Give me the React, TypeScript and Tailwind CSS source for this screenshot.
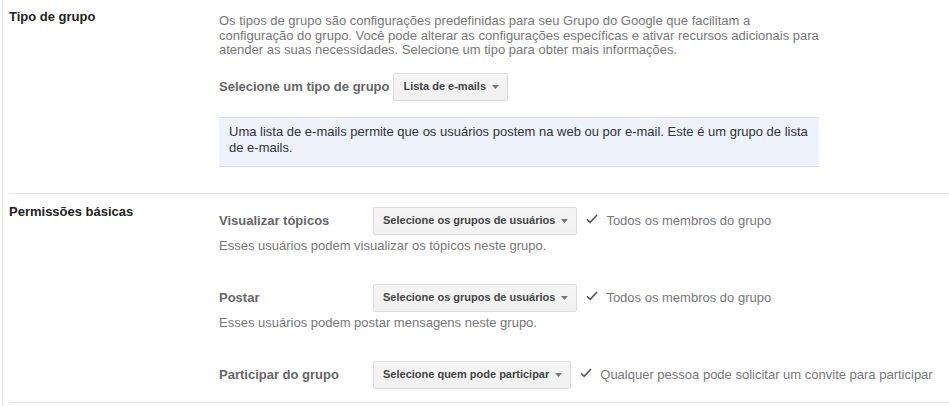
import { ReactNode } from 'react';

const font = { fontFamily: '"Liberation Sans", Arial, sans-serif' };

function Caret() {
  return (
    <svg width="7" height="4" viewBox="0 0 7 4" className="shrink-0">
      <path d="M0 0 L7 0 L3.5 4 Z" fill="#777" />
    </svg>
  );
}

function Check() {
  return (
    <svg width="12" height="10" viewBox="0 0 12 10" className="shrink-0 -mt-[4px]">
      <path d="M1 5.2 L4.2 8.4 L11 1" fill="none" stroke="#555" strokeWidth="1.6" />
    </svg>
  );
}

function DropButton({ children }: { children: ReactNode }) {
  return (
    <button className="flex items-center gap-[6px] h-[28px] pl-[9px] pr-[8px] rounded-[2px] border border-[#dcdcdc] bg-gradient-to-b from-[#f5f5f5] to-[#f1f1f1] text-[11px] font-bold text-[#444] whitespace-nowrap">
      {children}
      <Caret />
    </button>
  );
}

function Permission({ label, button, value, help }: { label: string; button: string; value: string; help?: string }) {
  return (
    <div>
      <div className="flex items-center">
        <div className="w-[154px] shrink-0 text-[13px] font-bold text-[#666]">{label}</div>
        <DropButton>{button}</DropButton>
        <div className="flex items-center ml-[9px] gap-[8px] text-[13px] text-[#777]">
          <Check />
          <span>{value}</span>
        </div>
      </div>
      {help && <p className="mt-[3px] text-[13px] leading-[16px] text-[#777]">{help}</p>}
    </div>
  );
}

export default function App() {
  return (
    <div className="min-h-[406px] w-[949px] bg-white ml-[2px] border-l border-[#e5e5e5]" style={font}>
      {/* Tipo de grupo */}
      <div className="flex ml-[6px] border-b border-[#e5e5e5] pb-[26px]">
        <div className="w-[210px] shrink-0 pt-[9px] text-[13px] leading-[16px] font-bold text-[#222]">Tipo de grupo</div>
        <div className="w-[600px] pt-[14px]">
          <p className="text-[13px] leading-[14.5px] text-[#777]">
            Os tipos de grupo são configurações predefinidas para seu Grupo do Google que facilitam a configuração do grupo. Você pode alterar as configurações específicas e ativar recursos adicionais para atender as suas necessidades. Selecione um tipo para obter mais informações.
          </p>
          <div className="flex items-center mt-[15px]">
            <span className="text-[13px] font-bold text-[#666] mr-[4px]">Selecione um tipo de grupo</span>
            <DropButton>Lista de e-mails</DropButton>
          </div>
          <div className="mt-[16px] border-y border-[#dedede] bg-[#edf2fd] px-[10px] pt-[6px] pb-[10px] text-[13px] leading-[16px] text-[#333]">
            Uma lista de e-mails permite que os usuários postem na web ou por e-mail. Este é um grupo de lista de e-mails.
          </div>
        </div>
      </div>

      {/* Permissões básicas */}
      <div className="flex ml-[6px] border-b border-[#e5e5e5] pb-[13px]">
        <div className="w-[210px] shrink-0 pt-[10px] text-[13px] leading-[16px] font-bold text-[#222]">Permissões básicas</div>
        <div className="pt-[13px] flex flex-col gap-[30px]">
          <Permission
            label="Visualizar tópicos"
            button="Selecione os grupos de usuários"
            value="Todos os membros do grupo"
            help="Esses usuários podem visualizar os tópicos neste grupo."
          />
          <Permission
            label="Postar"
            button="Selecione os grupos de usuários"
            value="Todos os membros do grupo"
            help="Esses usuários podem postar mensagens neste grupo."
          />
          <Permission
            label="Participar do grupo"
            button="Selecione quem pode participar"
            value="Qualquer pessoa pode solicitar um convite para participar"
          />
        </div>
      </div>
    </div>
  );
}
